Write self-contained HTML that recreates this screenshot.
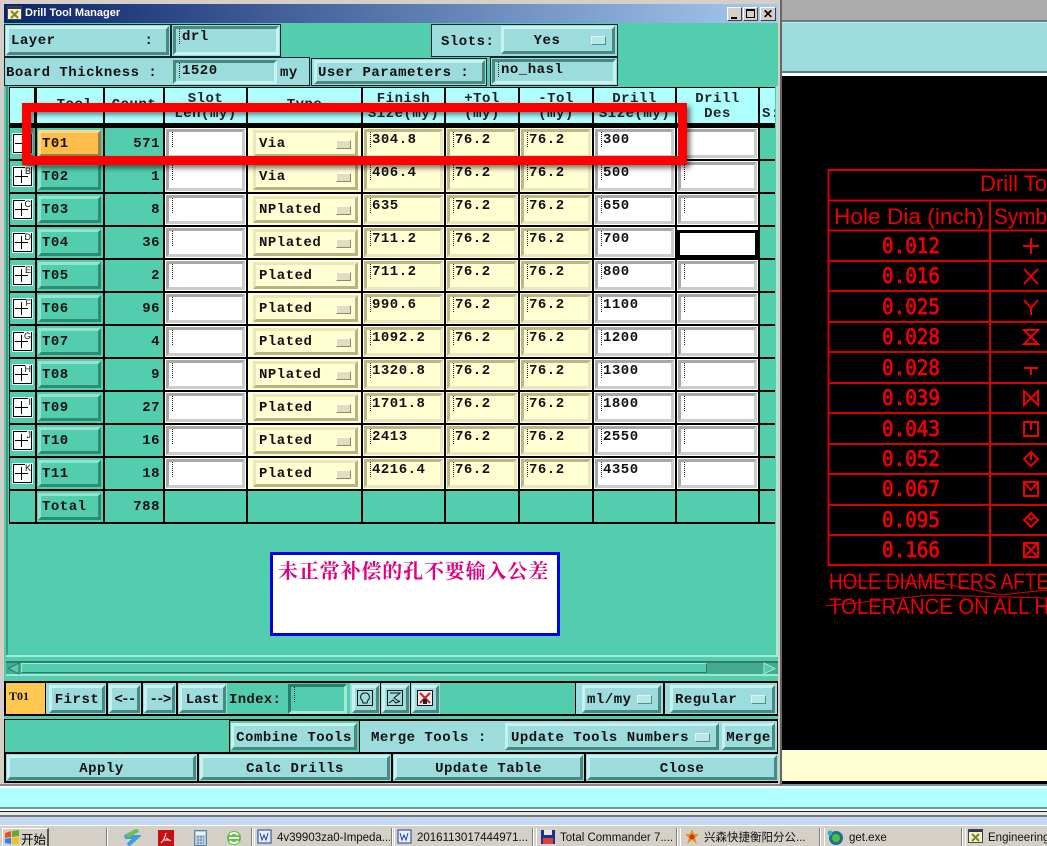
<!DOCTYPE html>
<html><head><meta charset="utf-8"><style>
html,body{margin:0;padding:0}
body{width:1047px;height:846px;position:relative;overflow:hidden;background:#000}
div,i,u,em,span{box-sizing:border-box}
.a{position:absolute;display:block}
.m{font:bold 14px/16px "Liberation Mono",monospace;letter-spacing:.5px;color:#111;white-space:pre}
.p{position:absolute;background:#9cdcdc;outline:1px solid #123;outline-offset:-1px}
.b{position:absolute;background:#9cdcdc;border:3px solid;border-color:#c6f2f0 #468a82 #468a82 #c6f2f0;text-align:center;white-space:pre;font:bold 14px/24px "Liberation Mono",monospace;letter-spacing:.5px;color:#111}
.in{position:absolute;background:#9cdcdc;border:3px solid;border-color:#468a82 #c6f2f0 #c6f2f0 #468a82;font:bold 14px/14px "Liberation Mono",monospace;letter-spacing:.5px;color:#111;padding:1px 0 0 6px;white-space:pre}
.in:before,.ci:before{content:"";position:absolute;left:3px;top:0;width:1px;height:15px;background:repeating-linear-gradient(#222 0 1px,transparent 1px 2px)}
.dd:after{content:"";position:absolute;right:6px;top:50%;margin-top:-4px;width:13px;height:7px;background:#b8e8e6;border:1px solid;border-color:#eee #4f8f88 #4f8f88 #eee}
.r{position:absolute;left:0;width:775px;height:33px}
.c{position:absolute;top:2px;height:31px;border-right:2px solid #000;font:bold 14px/16px "Liberation Mono",monospace;letter-spacing:.5px;color:#111;white-space:pre}
.c0{left:10px;width:27px;background:#52cdad}.c1{left:37px;width:68px;background:#52cdad}.c2{left:105px;width:60px;background:#52cdad;text-align:right;padding:8px 3px 0 0}
.c3{left:165px;width:83px;background:#fff}.c4{left:248px;width:115px;background:#ffffd2}.c5{left:363px;width:83px;background:#ffffd2}.c6{left:446px;width:74px;background:#ffffd2}.c7{left:520px;width:74px;background:#ffffd2}.c8{left:594px;width:83px;background:#fff}.c9{left:677px;width:83px;background:#fff}.c10{left:760px;width:15px;background:#52cdad;border:0}
.x{position:absolute;left:3px;top:6px;width:19px;height:19px;background:#fff;border:1px solid #000;box-shadow:0 0 0 1px #dff}
.x:before{content:"";position:absolute;left:1px;right:3px;top:8px;height:1px;background:#000}
.x:after{content:"";position:absolute;left:7px;top:2px;bottom:2px;width:1px;background:#000}
.x.mn:after{display:none}
.x b{position:absolute;right:0;top:-1px;font:9px/9px "Liberation Sans",sans-serif;letter-spacing:0;background:#fff}
.t{position:absolute;left:1px;top:2px;width:63px;height:27px;background:#52cdad;border:3px solid;border-color:#8fe6cc #2d8c74 #2d8c74 #8fe6cc;padding:2px 0 0 1px;line-height:18px}
.t.o{background:#ffbe4a;border-color:#ffd890 #9c8044 #9c8044 #ffd890}
.ci{position:absolute;left:1px;top:1px;right:1px;bottom:1px;border:3px solid;border-color:#a8a8a8 #ccc #ccc #a8a8a8;padding:1px 0 0 5px;line-height:14px}
.cy{border-color:#b8b888 #e8e8c0 #e8e8c0 #b8b888}
.ty{position:absolute;left:5px;top:2px;width:105px;height:27px;background:#ffffd2;border:3px solid;border-color:#e8e8bc #b4b484 #b4b484 #e8e8bc;padding:2px 0 0 3px;line-height:18px}
.ty:after{content:"";position:absolute;right:4px;top:7px;width:13px;height:7px;background:#e0e0b8;border:1px solid;border-color:#fff #888 #888 #fff}
.h{position:absolute;top:88px;height:35px;background:#b0ffff;border-right:2px solid #000;text-align:center;font:bold 14px/15px "Liberation Mono",monospace;letter-spacing:.5px;color:#222;white-space:pre;padding-top:4px}
.tk{position:absolute;top:828px;height:18px;font:11.500px/20px "Liberation Sans","Noto Sans CJK SC",sans-serif;color:#111;white-space:pre;overflow:hidden;border-left:1px solid #fff}
.sp{position:absolute;top:828px;width:2px;height:18px;background:#808080;border-right:1px solid #fff}
</style></head><body>

<!-- right side background -->
<div class="a" style="left:782px;top:0;width:265px;height:20px;background:#ababab"></div>
<div class="a" style="left:782px;top:20px;width:265px;height:3px;background:#5f7f7f;border-bottom:1px solid #c8f0f0"></div>
<div class="a" style="left:782px;top:23px;width:265px;height:50px;background:#9cdcdc;border-bottom:2px solid #5a8080"></div>
<div class="a" style="left:782px;top:73px;width:265px;height:3px;background:#fff"></div>
<div class="a" style="left:782px;top:76px;width:265px;height:674px;background:#000"></div>
<div class="a" style="left:782px;top:750px;width:265px;height:31px;background:#ffffd2"></div>
<div class="a" style="left:782px;top:781px;width:265px;height:3px;background:#000"></div>
<div class="a" style="left:782px;top:784px;width:265px;height:4px;background:#6f9a9a"></div>

<svg class="a" style="position:absolute;left:782px;top:76px" width="265" height="674" viewBox="782 76 265 674">
<g stroke="#d80000" stroke-width="2" fill="none">
<path d="M828.500 566V170H1047M828 200.500H1047M828 230.500H1047M828 261H1047M828 291H1047M828 322H1047M828 352H1047M828 383H1047M828 413H1047M828 444H1047M828 474H1047M828 505H1047M828 535H1047M828 565H1047M990 200V565"/>
</g>
<g fill="#f00000" font-family="'DejaVu Sans Mono',monospace" font-size="21" stroke="#f00000" stroke-width=".7">
<text x="882" y="253" textLength="58" lengthAdjust="spacingAndGlyphs">0.012</text>
<text x="882" y="283" textLength="58" lengthAdjust="spacingAndGlyphs">0.016</text>
<text x="882" y="314" textLength="58" lengthAdjust="spacingAndGlyphs">0.025</text>
<text x="882" y="344" textLength="58" lengthAdjust="spacingAndGlyphs">0.028</text>
<text x="882" y="375" textLength="58" lengthAdjust="spacingAndGlyphs">0.028</text>
<text x="882" y="405" textLength="58" lengthAdjust="spacingAndGlyphs">0.039</text>
<text x="882" y="436" textLength="58" lengthAdjust="spacingAndGlyphs">0.043</text>
<text x="882" y="466" textLength="58" lengthAdjust="spacingAndGlyphs">0.052</text>
<text x="882" y="496" textLength="58" lengthAdjust="spacingAndGlyphs">0.067</text>
<text x="882" y="527" textLength="58" lengthAdjust="spacingAndGlyphs">0.095</text>
<text x="882" y="557" textLength="58" lengthAdjust="spacingAndGlyphs">0.166</text>
</g>
<g fill="#f00000" font-family="'Liberation Sans',sans-serif" font-size="22">
<text x="980" y="191" textLength="67" lengthAdjust="spacingAndGlyphs">Drill To</text>
<text x="834" y="224" textLength="150" lengthAdjust="spacingAndGlyphs">Hole Dia (inch)</text>
<text x="994" y="224" textLength="53" lengthAdjust="spacingAndGlyphs">Symb</text>
<text x="829" y="589" textLength="220" lengthAdjust="spacingAndGlyphs">HOLE DIAMETERS AFTE</text>
<text x="829" y="614" textLength="220" lengthAdjust="spacingAndGlyphs">TOLERANCE ON ALL H</text>
</g>
<g stroke="#f00000" stroke-width="2" fill="none">
<path d="M1023 246H1039M1031 238V254"/>
<path d="M1024 269L1038 284M1038 269L1024 284"/>
<path d="M1024 300L1031 308L1038 300M1031 308V315"/>
<path d="M1024 330H1038L1024 344H1038Z"/>
<path d="M1024 368H1038M1031 368V375"/>
<path d="M1024 391V405L1038 391V405Z"/>
<path d="M1024 422H1038V436H1024ZM1031 422V430"/>
<path d="M1031 452L1038 459L1031 466L1024 459ZM1031 452V460"/>
<path d="M1024 482H1038V496H1024ZM1024 482L1031 490L1038 482"/>
<path d="M1031 513L1038 520L1031 527L1024 520ZM1027 516L1031 520L1035 516"/>
<path d="M1024 543H1038V557H1024ZM1024 543L1038 557M1038 543L1024 557"/>
</g>
<g stroke="#e00000" stroke-width="1" fill="none">
<path d="M829 581H930L1000 595L1047 590M825 606L930 595L1047 598"/>
</g>
</svg>

<!-- window -->
<div class="a" style="left:0;top:0;width:782px;height:786px;background:#d4d0c8;border-right:2px solid #666;border-bottom:2px solid #888"></div>
<div class="a" style="left:4px;top:4px;width:774px;height:19px;background:linear-gradient(90deg,#0a246a,#a6caf0)"></div>
<svg class="a" style="position:absolute;left:7px;top:6px" width="16" height="15"><rect x=".5" y=".5" width="14" height="13" fill="#f4f0c8" stroke="#445"/><rect x="1" y="1" width="13" height="2" fill="#335"/><path d="M4 5L11 12M11 5L4 12" stroke="#7a8a20" stroke-width="2"/></svg>
<div class="a" style="left:25px;top:6px;font:bold 11px/15px 'Liberation Sans',sans-serif;color:#fff">Drill Tool Manager</div>
<div class="a" style="left:727px;top:7px;width:15px;height:14px;background:#d4d0c8;border:1px solid;border-color:#fff #404040 #404040 #fff"><div class="a" style="left:3px;top:9px;width:6px;height:2px;background:#000"></div></div>
<div class="a" style="left:743px;top:7px;width:15px;height:14px;background:#d4d0c8;border:1px solid;border-color:#fff #404040 #404040 #fff"><div class="a" style="left:2px;top:1px;width:9px;height:9px;border:1px solid #000;border-top-width:2px"></div></div>
<div class="a" style="left:760px;top:7px;width:16px;height:14px;background:#d4d0c8;border:1px solid;border-color:#fff #404040 #404040 #fff;font:bold 12px/12px 'Liberation Sans',sans-serif;text-align:center;color:#000">✕</div>

<div class="a" style="left:4px;top:23px;width:774px;height:760px;background:#52cdad"></div>

<!-- top row -->
<div class="p" style="left:4px;top:24px;width:167px;height:33px"></div>
<div class="b" style="left:6px;top:26px;width:163px;height:29px;text-align:left;padding-left:2px">Layer          :</div>
<div class="p" style="left:171px;top:24px;width:110px;height:33px"></div>
<div class="in" style="left:173px;top:26px;width:106px;height:29px">drl</div>
<div class="p" style="left:431px;top:24px;width:187px;height:33px"></div>
<div class="a m" style="left:441px;top:34px">Slots:</div>
<div class="b dd" style="left:501px;top:26px;width:114px;height:28px;padding-right:22px">Yes</div>

<div class="p" style="left:4px;top:57px;width:306px;height:29px"></div>
<div class="a m" style="left:6px;top:65px">Board Thickness :</div>
<div class="in" style="left:173px;top:60px;width:104px;height:24px">1520</div>
<div class="a m" style="left:280px;top:65px">my</div>
<div class="p" style="left:311px;top:58px;width:176px;height:28px"></div>
<div class="b" style="left:314px;top:60px;width:171px;height:24px;line-height:21px;text-align:left;padding-left:1px">User Parameters :</div>
<div class="p" style="left:490px;top:57px;width:128px;height:29px"></div>
<div class="in" style="left:492px;top:59px;width:124px;height:25px">no_hasl</div>

<!-- table area frame -->
<div class="a" style="left:6px;top:86px;width:2px;height:570px;background:#3c9a84"></div>
<div class="a" style="left:776px;top:86px;width:2px;height:570px;background:#a0ecd8"></div>
<div class="a" style="left:6px;top:655px;width:772px;height:2px;background:#a0ecd8"></div>

<!-- header -->
<div class="a" style="left:9px;top:87px;width:766px;height:40px;background:#000"></div>
<div class="h" style="left:10px;width:26px"></div>
<div class="h" style="left:37px;width:68px;padding-top:10px"> Tool</div>
<div class="h" style="left:105px;width:60px;padding-top:10px">Count</div>
<div class="h" style="left:165px;width:83px">Slot
Len(my)</div>
<div class="h" style="left:248px;width:115px;padding-top:10px">Type</div>
<div class="h" style="left:363px;width:83px">Finish
Size(my)</div>
<div class="h" style="left:446px;width:74px">+Tol
(my)</div>
<div class="h" style="left:520px;width:74px">-Tol
(my)</div>
<div class="h" style="left:594px;width:83px">Drill
Size(my)</div>
<div class="h" style="left:677px;width:83px">Drill
Des</div>
<div class="h" style="left:760px;width:15px;border:0;text-align:left;padding:19px 0 0 2px;overflow:hidden">S:</div>

<!-- rows -->
<div class="a" style="left:9px;top:126px;width:766px;height:398px;background:#000"></div>

<div class="r" style="top:126px"><div class="c c0"><div class="x mn"><b>A</b></div></div><div class="c c1"><div class="t o">T01</div></div><div class="c c2">571</div><div class="c c3"><div class="ci"></div></div><div class="c c4"><div class="ty">Via</div></div><div class="c c5"><div class="ci cy">304.8</div></div><div class="c c6"><div class="ci cy">76.2</div></div><div class="c c7"><div class="ci cy">76.2</div></div><div class="c c8"><div class="ci">300</div></div><div class="c c9"><div class="ci"></div></div><div class="c c10"></div></div>

<div class="r" style="top:159px"><div class="c c0"><div class="x"><b>B</b></div></div><div class="c c1"><div class="t">T02</div></div><div class="c c2">1</div><div class="c c3"><div class="ci"></div></div><div class="c c4"><div class="ty">Via</div></div><div class="c c5"><div class="ci cy">406.4</div></div><div class="c c6"><div class="ci cy">76.2</div></div><div class="c c7"><div class="ci cy">76.2</div></div><div class="c c8"><div class="ci">500</div></div><div class="c c9"><div class="ci"></div></div><div class="c c10"></div></div>

<div class="r" style="top:192px"><div class="c c0"><div class="x"><b>C</b></div></div><div class="c c1"><div class="t">T03</div></div><div class="c c2">8</div><div class="c c3"><div class="ci"></div></div><div class="c c4"><div class="ty">NPlated</div></div><div class="c c5"><div class="ci cy">635</div></div><div class="c c6"><div class="ci cy">76.2</div></div><div class="c c7"><div class="ci cy">76.2</div></div><div class="c c8"><div class="ci">650</div></div><div class="c c9"><div class="ci"></div></div><div class="c c10"></div></div>

<div class="r" style="top:225px"><div class="c c0"><div class="x"><b>D</b></div></div><div class="c c1"><div class="t">T04</div></div><div class="c c2">36</div><div class="c c3"><div class="ci"></div></div><div class="c c4"><div class="ty">NPlated</div></div><div class="c c5"><div class="ci cy">711.2</div></div><div class="c c6"><div class="ci cy">76.2</div></div><div class="c c7"><div class="ci cy">76.2</div></div><div class="c c8"><div class="ci">700</div></div><div class="c c9"><div class="a" style="left:0;top:3px;width:81px;height:28px;border:3px solid #000;background:#fff"></div></div><div class="c c10"></div></div>

<div class="r" style="top:258px"><div class="c c0"><div class="x"><b>E</b></div></div><div class="c c1"><div class="t">T05</div></div><div class="c c2">2</div><div class="c c3"><div class="ci"></div></div><div class="c c4"><div class="ty">Plated</div></div><div class="c c5"><div class="ci cy">711.2</div></div><div class="c c6"><div class="ci cy">76.2</div></div><div class="c c7"><div class="ci cy">76.2</div></div><div class="c c8"><div class="ci">800</div></div><div class="c c9"><div class="ci"></div></div><div class="c c10"></div></div>

<div class="r" style="top:291px"><div class="c c0"><div class="x"><b>F</b></div></div><div class="c c1"><div class="t">T06</div></div><div class="c c2">96</div><div class="c c3"><div class="ci"></div></div><div class="c c4"><div class="ty">Plated</div></div><div class="c c5"><div class="ci cy">990.6</div></div><div class="c c6"><div class="ci cy">76.2</div></div><div class="c c7"><div class="ci cy">76.2</div></div><div class="c c8"><div class="ci">1100</div></div><div class="c c9"><div class="ci"></div></div><div class="c c10"></div></div>

<div class="r" style="top:324px"><div class="c c0"><div class="x"><b>G</b></div></div><div class="c c1"><div class="t">T07</div></div><div class="c c2">4</div><div class="c c3"><div class="ci"></div></div><div class="c c4"><div class="ty">Plated</div></div><div class="c c5"><div class="ci cy">1092.2</div></div><div class="c c6"><div class="ci cy">76.2</div></div><div class="c c7"><div class="ci cy">76.2</div></div><div class="c c8"><div class="ci">1200</div></div><div class="c c9"><div class="ci"></div></div><div class="c c10"></div></div>

<div class="r" style="top:357px"><div class="c c0"><div class="x"><b>H</b></div></div><div class="c c1"><div class="t">T08</div></div><div class="c c2">9</div><div class="c c3"><div class="ci"></div></div><div class="c c4"><div class="ty">NPlated</div></div><div class="c c5"><div class="ci cy">1320.8</div></div><div class="c c6"><div class="ci cy">76.2</div></div><div class="c c7"><div class="ci cy">76.2</div></div><div class="c c8"><div class="ci">1300</div></div><div class="c c9"><div class="ci"></div></div><div class="c c10"></div></div>

<div class="r" style="top:390px"><div class="c c0"><div class="x"><b>I</b></div></div><div class="c c1"><div class="t">T09</div></div><div class="c c2">27</div><div class="c c3"><div class="ci"></div></div><div class="c c4"><div class="ty">Plated</div></div><div class="c c5"><div class="ci cy">1701.8</div></div><div class="c c6"><div class="ci cy">76.2</div></div><div class="c c7"><div class="ci cy">76.2</div></div><div class="c c8"><div class="ci">1800</div></div><div class="c c9"><div class="ci"></div></div><div class="c c10"></div></div>

<div class="r" style="top:423px"><div class="c c0"><div class="x"><b>J</b></div></div><div class="c c1"><div class="t">T10</div></div><div class="c c2">16</div><div class="c c3"><div class="ci"></div></div><div class="c c4"><div class="ty">Plated</div></div><div class="c c5"><div class="ci cy">2413</div></div><div class="c c6"><div class="ci cy">76.2</div></div><div class="c c7"><div class="ci cy">76.2</div></div><div class="c c8"><div class="ci">2550</div></div><div class="c c9"><div class="ci"></div></div><div class="c c10"></div></div>

<div class="r" style="top:456px"><div class="c c0"><div class="x"><b>K</b></div></div><div class="c c1"><div class="t">T11</div></div><div class="c c2">18</div><div class="c c3"><div class="ci"></div></div><div class="c c4"><div class="ty">Plated</div></div><div class="c c5"><div class="ci cy">4216.4</div></div><div class="c c6"><div class="ci cy">76.2</div></div><div class="c c7"><div class="ci cy">76.2</div></div><div class="c c8"><div class="ci">4350</div></div><div class="c c9"><div class="ci"></div></div><div class="c c10"></div></div>

<div class="r" style="top:489px"><div class="c c0"></div><div class="c c1"><div class="t">Total</div></div><div class="c c2">788</div><div class="c c3" style="background:#52cdad"></div><div class="c c4" style="background:#52cdad"></div><div class="c c5" style="background:#52cdad"></div><div class="c c6" style="background:#52cdad"></div><div class="c c7" style="background:#52cdad"></div><div class="c c8" style="background:#52cdad"></div><div class="c c9" style="background:#52cdad"></div><div class="c c10"></div></div>

<!-- red annotation -->
<div class="a" style="left:22px;top:103px;width:665px;height:62px;border:9px solid #f00;box-shadow:3px 3px 5px rgba(0,0,0,.55),inset 3px 3px 5px rgba(0,0,0,.45)"></div>

<!-- note -->
<div class="a" style="left:270px;top:552px;width:290px;height:84px;background:#fff;border:3px solid #0000e0;padding:2px 0 0 5px;font:bold 20px/26px 'Noto Serif CJK SC','Noto Sans CJK SC',serif;letter-spacing:.85px;color:#e0007f;white-space:nowrap">未正常补偿的孔不要输入公差</div>

<!-- scrollbar -->
<div class="a" style="left:6px;top:661px;width:772px;height:15px;background:#45ab90;border-top:2px solid #2d7d6c;border-bottom:2px solid #9ee8d4"></div>
<div class="a" style="left:21px;top:663px;width:686px;height:10px;background:#52cdad;border:1px solid;border-color:#9ee8d4 #2d7d6c #2d7d6c #9ee8d4"></div>
<svg class="a" style="position:absolute;left:7px;top:662px" width="14" height="13"><path d="M12 1V12L1 6.500Z" fill="#52cdad" stroke="#2d7d6c"/></svg>
<svg class="a" style="position:absolute;left:763px;top:662px" width="14" height="13"><path d="M1 1V12L12 6.500Z" fill="#52cdad" stroke="#9ee8d4"/></svg>

<!-- toolbar -->
<div class="a" style="left:4px;top:681px;width:774px;height:35px;background:#000"></div>
<div class="a" style="left:6px;top:683px;width:39px;height:31px;background:#ffc850;font:bold 12px/27px 'Liberation Serif',serif;color:#111;padding-left:3px">T01</div>
<div class="a" style="left:46px;top:683px;width:181px;height:31px;background:#9cdcdc"></div>
<div class="a" style="left:106px;top:683px;width:2px;height:31px;background:#000"></div>
<div class="a" style="left:141px;top:683px;width:2px;height:31px;background:#000"></div>
<div class="a" style="left:176px;top:683px;width:2px;height:31px;background:#000"></div>
<div class="b" style="left:49px;top:685px;width:56px;height:28px">First</div>
<div class="b" style="left:109px;top:685px;width:31px;height:28px;letter-spacing:-1.7px">&lt;--</div>
<div class="b" style="left:144px;top:685px;width:31px;height:28px;letter-spacing:-1.7px">--&gt;</div>
<div class="b" style="left:179px;top:685px;width:47px;height:28px;letter-spacing:0">Last</div>
<div class="a" style="left:227px;top:683px;width:123px;height:31px;background:#52cdad"></div>
<div class="a m" style="left:229px;top:692px;letter-spacing:.3px">Index:</div>
<div class="in" style="left:288px;top:684px;width:59px;height:30px;background:#52cdad;border-color:#2d7d6c #9ee8d4 #9ee8d4 #2d7d6c"></div>
<div class="a" style="left:350px;top:683px;width:90px;height:31px;background:#9cdcdc"></div>
<div class="a" style="left:380px;top:683px;width:1px;height:31px;background:#000"></div>
<div class="a" style="left:410px;top:683px;width:1px;height:31px;background:#000"></div>
<div class="b" style="left:352px;top:685px;width:27px;height:28px"></div>
<div class="b" style="left:382px;top:685px;width:27px;height:28px"></div>
<div class="b" style="left:412px;top:685px;width:27px;height:28px"></div>
<svg class="a" style="position:absolute;left:357px;top:690px" width="17" height="17"><rect x=".5" y=".5" width="15" height="15" fill="none" stroke="#111"/><path d="M8 3a4 4 0 0 1 3 7l-1 3H6l-1-3a4 4 0 0 1 3-7Z" fill="none" stroke="#111"/></svg>
<svg class="a" style="position:absolute;left:387px;top:690px" width="17" height="17"><rect x=".5" y=".5" width="15" height="15" fill="none" stroke="#111"/><path d="M3 3H13L7 8L13 12M2 13L6 10L9 13L13 11" fill="none" stroke="#111"/></svg>
<svg class="a" style="position:absolute;left:417px;top:690px" width="17" height="17"><rect x=".5" y=".5" width="15" height="15" fill="#eee" stroke="#111"/><path d="M3 3L13 13M13 3L3 13" stroke="#d02020" stroke-width="2"/><rect x="6" y="9" width="4" height="5" fill="#222"/></svg>
<div class="a" style="left:440px;top:683px;width:135px;height:31px;background:#52cdad"></div>
<div class="a" style="left:576px;top:683px;width:87px;height:31px;background:#9cdcdc"></div>
<div class="b dd" style="left:582px;top:685px;width:79px;height:28px;text-align:left;padding-left:2px">ml/my</div>
<div class="a" style="left:665px;top:683px;width:112px;height:31px;background:#9cdcdc"></div>
<div class="b dd" style="left:670px;top:685px;width:105px;height:28px;text-align:left;padding-left:2px">Regular</div>

<!-- merge row -->
<div class="a" style="left:4px;top:719px;width:774px;height:35px;background:#000"></div>
<div class="a" style="left:5px;top:720px;width:224px;height:32px;background:#52cdad"></div>
<div class="a" style="left:230px;top:721px;width:129px;height:31px;background:#52cdad"></div>
<div class="b" style="left:231px;top:723px;width:126px;height:27px">Combine Tools</div>
<div class="a" style="left:360px;top:721px;width:417px;height:31px;background:#9cdcdc"></div>
<div class="a m" style="left:371px;top:730px">Merge Tools :</div>
<div class="b dd" style="left:505px;top:723px;width:214px;height:27px;text-align:left;padding-left:3px">Update Tools Numbers</div>
<div class="b" style="left:722px;top:723px;width:53px;height:27px">Merge</div>

<!-- action row -->
<div class="a" style="left:4px;top:753px;width:774px;height:30px;background:#000"></div>
<div class="a" style="left:6px;top:754px;width:772px;height:27px;background:#9cdcdc"></div>
<div class="a" style="left:197px;top:754px;width:2px;height:27px;background:#000"></div>
<div class="a" style="left:391px;top:754px;width:2px;height:27px;background:#000"></div>
<div class="a" style="left:584px;top:754px;width:2px;height:27px;background:#000"></div>
<div class="b" style="left:7px;top:755px;width:189px;height:25px;line-height:22px">Apply</div>
<div class="b" style="left:200px;top:755px;width:190px;height:25px;line-height:22px">Calc Drills</div>
<div class="b" style="left:394px;top:755px;width:189px;height:25px;line-height:22px">Update Table</div>
<div class="b" style="left:587px;top:755px;width:190px;height:25px;line-height:22px">Close</div>

<!-- lower chrome -->
<div class="a" style="left:0;top:786px;width:1047px;height:2px;background:#fff"></div>
<div class="a" style="left:0;top:788px;width:1047px;height:21px;background:#b0ffff;border-bottom:2px solid #6f9a9a"></div>
<div class="a" style="left:0;top:809px;width:1047px;height:2px;background:#fff"></div>
<div class="a" style="left:0;top:811px;width:1047px;height:1px;background:#222"></div>
<div class="a" style="left:0;top:812px;width:1047px;height:5px;background:#e8e8e4;border-bottom:2px solid #777"></div>
<div class="a" style="left:0;top:817px;width:1047px;height:8px;background:#c4d8f4"></div>
<div class="a" style="left:0;top:825px;width:1047px;height:21px;background:#d4d0c8;border-top:1px solid #fff"></div>

<!-- taskbar -->
<div class="a" style="left:2px;top:828px;width:47px;height:18px;border-left:1px solid #fff;border-top:1px solid #fff;border-right:2px solid #555;font:12.500px/19px 'Noto Sans CJK SC',sans-serif;color:#000;padding-left:18px;white-space:nowrap;overflow:hidden">开始</div>
<svg class="a" style="position:absolute;left:4px;top:830px" width="16" height="15"><path d="M1 3L7 1V7L1 8Z" fill="#e85020"/><path d="M8 1L15 0V6L8 7Z" fill="#60b030"/><path d="M1 9L7 8V14L1 13Z" fill="#3080e0"/><path d="M8 8L15 7V14L8 14Z" fill="#f0c020"/></svg>
<div class="sp" style="left:106px"></div>
<svg class="a" style="position:absolute;left:123px;top:829px" width="18" height="17"><path d="M15 1L2 8H14L5 16" fill="none" stroke="#3aa0d8" stroke-width="4"/><path d="M15 1L4 7" stroke="#70c050" stroke-width="4"/></svg>
<svg class="a" style="position:absolute;left:158px;top:830px" width="16" height="16"><rect width="16" height="16" fill="#c81010"/><path d="M8 3C7 8 5 11 3 13M8 8L13 11M5 10H11" stroke="#fff" fill="none"/></svg>
<svg class="a" style="position:absolute;left:194px;top:830px" width="13" height="16"><rect x=".5" y=".5" width="12" height="15" fill="#b8cce0" stroke="#6080a0"/><rect x="2" y="2" width="9" height="3" fill="#e8f4ff"/><path d="M3 7H10M3 10H10M3 13H10" stroke="#5070a0" stroke-dasharray="2 1"/></svg>
<svg class="a" style="position:absolute;left:226px;top:830px" width="16" height="16"><circle cx="8" cy="8" r="7" fill="#60c040"/><path d="M3 8H13M12 5A5 5 0 0 0 4 5" stroke="#fff" stroke-width="2" fill="none"/><path d="M4 11A5 5 0 0 0 12 11" stroke="#fff" stroke-width="2" fill="none"/></svg>

<div class="sp" style="left:251px"></div>
<div class="tk" style="left:254px;width:136px"><svg width="16" height="15" style="vertical-align:-3px;margin:0 4px 0 2px"><rect x="1" y="1" width="13" height="13" fill="#e8f0ff" stroke="#2040a0"/><path d="M3 4L5 11L7 6L9 11L11 4" stroke="#2040a0" fill="none"/></svg>4v39903za0-Impeda...</div>
<div class="sp" style="left:391px"></div>
<div class="tk" style="left:394px;width:136px"><svg width="16" height="15" style="vertical-align:-3px;margin:0 4px 0 2px"><rect x="1" y="1" width="13" height="13" fill="#e8f0ff" stroke="#2040a0"/><path d="M3 4L5 11L7 6L9 11L11 4" stroke="#2040a0" fill="none"/></svg>2016113017444971...</div>
<div class="sp" style="left:532px"></div>
<div class="tk" style="left:536px;width:138px"><svg width="16" height="15" style="vertical-align:-3px;margin:0 4px 0 3px"><rect x="1" y="1" width="14" height="14" fill="#203090"/><rect x="4" y="1" width="8" height="5" fill="#e8e8e8"/><rect x="3" y="9" width="10" height="6" fill="#e04040"/></svg>Total Commander 7....</div>
<div class="sp" style="left:676px"></div>
<div class="tk" style="left:680px;width:137px"><svg width="16" height="15" style="vertical-align:-3px;margin:0 4px 0 3px"><path d="M8 0L10 5H15L11 9L13 15L8 11L3 15L5 9L1 5H6Z" fill="#e89020"/><circle cx="8" cy="8" r="2.500" fill="#d03020"/></svg>兴森快捷衡阳分公...</div>
<div class="sp" style="left:819px"></div>
<div class="tk" style="left:824px;width:136px"><svg width="20" height="16" style="vertical-align:-4px;margin:0 3px 0 1px"><circle cx="10" cy="9" r="7" fill="#207090"/><circle cx="10" cy="9" r="4" fill="#50c040"/><circle cx="4" cy="4" r="2.500" fill="#30b0c0"/></svg>get.exe</div>
<div class="sp" style="left:961px"></div>
<div class="tk" style="left:965px;width:82px"><svg width="16" height="15" style="vertical-align:-3px;margin:0 4px 0 2px"><rect x=".5" y=".5" width="14" height="13" fill="#f4f0c8" stroke="#445"/><rect x="1" y="1" width="13" height="2" fill="#335"/><path d="M4 5L11 12M11 5L4 12" stroke="#7a8a20" stroke-width="2"/></svg>Engineering</div>
</body></html>
